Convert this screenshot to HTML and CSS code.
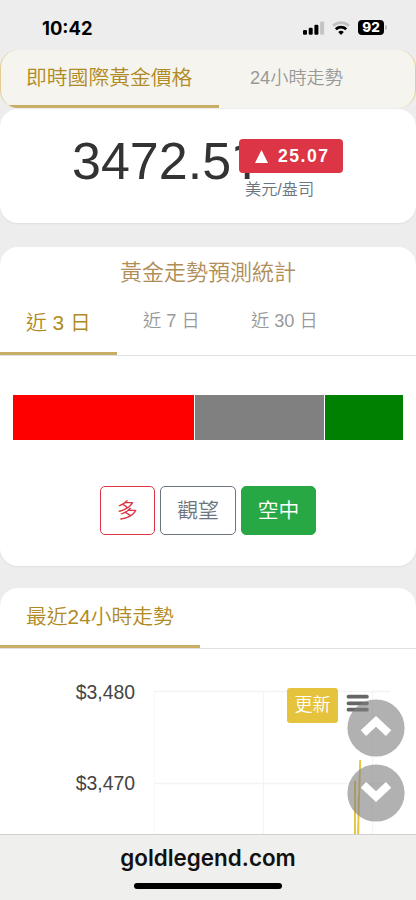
FILE: index.html
```html
<!DOCTYPE html>
<html lang="zh-Hant">
<head>
<meta charset="utf-8">
<meta name="viewport" content="width=device-width, initial-scale=1">
<title>goldlegend.com</title>
<link rel="stylesheet" href="styles.css">
</head>
<body>
<div class="screen">
  <header class="status">
    <span class="clock">10:42</span>
    <div class="indicators">
      <svg class="signal" width="22" height="14" viewBox="0 0 22 14">
        <rect x="0" y="8.9" width="4" height="4.9" rx="1.2"/>
        <rect x="5.7" y="6.8" width="4" height="7" rx="1.2"/>
        <rect x="11.4" y="3.8" width="4" height="10" rx="1.2"/>
        <rect x="17.1" y="0.6" width="4" height="13.2" rx="1.2" fill="#c4c4c4"/>
      </svg>
      <svg class="wifi" width="18" height="14" viewBox="0 0 18 14">
        <path d="M1.1 4.8a11.4 11.4 0 0 1 15.8 0" fill="none" stroke="#c1c1c1" stroke-width="2.6"/>
        <path d="M3.8 8.2a7.5 7.5 0 0 1 10.4 0" fill="none" stroke="#000" stroke-width="2.8"/>
        <path d="M6.2 11.1a4.2 4.2 0 0 1 5.6 0L9 14z"/>
      </svg>
      <div class="battery"><span class="level">92</span><span class="cap"></span></div>
    </div>
  </header>

  <nav class="price-tabs">
    <a class="price-tab active">即時國際黃金價格</a>
    <a class="price-tab">24小時走勢</a>
  </nav>

  <section class="card price-card">
    <span class="price">3472.5<span class="one">1</span></span>
    <div class="change">
      <span class="badge"><svg width="13" height="13" viewBox="0 0 13 13"><path d="M6.5 0 13 13H0z" fill="#fff"/></svg>25.07</span>
      <span class="unit">美元/盎司</span>
    </div>
  </section>

  <section class="card stats-card">
    <h2 class="stats-title">黃金走勢預測統計</h2>
    <nav class="range-tabs">
      <a class="range active">近 3 日</a>
      <a class="range week">近 7 日</a>
      <a class="range">近 30 日</a>
    </nav>
    <div class="bar"><i class="bull"></i><i class="hold"></i><i class="bear"></i></div>
    <div class="votes">
      <button class="vote long">多</button>
      <button class="vote wait">觀望</button>
      <button class="vote short">空中</button>
    </div>
  </section>

  <section class="card trend-card">
    <div class="trend-head"><span class="trend-tab">最近24小時走勢</span></div>
    <div class="chart">
      <div class="axis"><span>$3,480</span><span>$3,470</span></div>
      <svg class="plot" width="262" height="185" viewBox="154 649 262 185">
        <path d="M154 691.5H390M154 783.5H390M154 691V834M263.5 691V834M372.5 691V834" fill="none" stroke="#f4f4f4" stroke-width="1.3"/>
        <path d="M355 834V781M358 834 360.2 760M358.3 834 358.6 796" fill="none" stroke="#e7c43d" stroke-width="1.9"/>
        <path d="M348.5 696.7h18.4M348.5 703.3h18.4M348.5 709.7h18.4" stroke="#666" stroke-width="3.8" stroke-linecap="round"/>
      </svg>
      <button class="refresh">更新</button>
      <div class="scrollers">
        <svg width="58" height="58" viewBox="0 0 58 58"><circle cx="29" cy="29" r="28.6"/><path d="M16.4 34.2 29 22.4 41.6 34.2"/></svg>
        <svg width="58" height="58" viewBox="0 0 58 58"><circle cx="29" cy="29" r="28.6"/><path d="M16.4 20.8 29 32.6 41.6 20.8"/></svg>
      </div>
    </div>
  </section>

  <footer class="browser">
    <span class="address">goldlegend.com</span>
    <span class="home"></span>
  </footer>
</div>
</body>
</html>
```

FILE: styles.css
```css
* { box-sizing: border-box; }
body {
  margin: 0;
  background: #ededed;
  font-family: "Liberation Sans", "Noto Sans CJK TC", sans-serif;
  font-weight: 350;
}
.screen {
  width: 416px;
  height: 900px;
  overflow: hidden;
  display: flex;
  flex-direction: column;
}
.status {
  height: 50px;
  display: flex;
  justify-content: space-between;
  align-items: center;
  padding: 5px 29px 0 42px;
}
.clock { font: 700 18.4px/22px Inter, sans-serif; }
.indicators { display: flex; align-items: center; }
.wifi { margin: 0 8px 0 7px; }
.battery { display: flex; align-items: center; gap: 1px; }
.level {
  width: 26px;
  height: 15px;
  border-radius: 4px;
  background: #000;
  color: #fff;
  font: 800 13.5px/15px Inter, sans-serif;
  text-align: center;
}
.cap { width: 2px; height: 5px; border-radius: 0 2px 2px 0; background: #bbb; }
.price-tabs {
  height: 58px;
  display: flex;
  border: 0 solid #e3cd92;
  border-width: 0 1px;
  border-radius: 18px;
  background: #f5f4ee;
  overflow: hidden;
}
.price-tab {
  color: #999;
  font-size: 18.2px;
  line-height: 57px;
  padding-left: 31px;
}
.price-tab.active {
  width: 218px;
  padding-left: 25px;
  color: #b08a23;
  font-size: 20.8px;
  line-height: 55px;
  border-bottom: 3px solid #c9ae66;
}
.card { background: #fff; border-radius: 18px; box-shadow: 0 1px 2px rgba(0,0,0,.06); }
.price-card {
  margin-top: 1px;
  height: 114px;
  display: flex;
  padding: 22px 0 0 72px;
}
.price { width: 167px; color: #333; font-size: 52px; line-height: 60px; font-weight: 400; white-space: nowrap; }
.one { font-family: Roboto, sans-serif; line-height: 1; }
.change { position: relative; display: flex; flex-direction: column; padding-top: 8px; }
.badge {
  width: 104px;
  height: 34px;
  display: flex;
  align-items: center;
  gap: 10px;
  padding-left: 16px;
  border-radius: 4px;
  background: #dc3545;
  color: #fff;
  font-size: 17.6px;
  font-weight: 700;
  letter-spacing: 1.5px;
}
.unit { padding-left: 6px; color: #6c757d; font-size: 16.2px; line-height: 33px; }
.stats-card { margin-top: 24px; height: 319px; }
.stats-title { margin: 0; padding-top: 10px; text-align: center; color: #b08d57; font-size: 22px; line-height: 32px; font-weight: 350; }
.range-tabs { height: 67px; display: flex; border-bottom: 1px solid #dee2e6; }
.range { padding-left: 25px; color: #999; font-size: 18.2px; line-height: 65px; white-space: nowrap; }
.range.week { width: 109px; padding-left: 26px; }
.range.active { width: 117px; height: 66px; padding-left: 26px; color: #b08a23; font-size: 20.8px; line-height: 68px; border-bottom: 3px solid #c9ae66; }
.bar { display: flex; gap: 1px; height: 45px; margin: 39px 13px 0; }
.bull { width: 181px; background: red; }
.hold { width: 129px; background: gray; }
.bear { flex: 1; background: green; }
.votes { display: flex; justify-content: center; gap: 5px; margin-top: 46px; }
.vote {
  height: 49px;
  padding: 0 0 4px;
  border: 1px solid;
  border-radius: 5px;
  background: #fff;
  font: inherit;
  font-size: 20.8px;
}
.long { width: 55px; color: #dc3545; }
.wait { width: 76px; color: #6c757d; }
.short { width: 75px; color: #fff; background: #28a745; border-color: #28a745; }
.trend-card { margin-top: 22px; height: 246px; border-radius: 18px 18px 0 0; }
.trend-head { height: 61px; display: flex; border-bottom: 1px solid #dee2e6; }
.trend-tab { width: 200px; height: 60px; padding-left: 26px; color: #b08a23; font-size: 20.8px; line-height: 57px; border-bottom: 3px solid #c9ae66; }
.chart { position: relative; display: flex; height: 185px; }
.axis { width: 154px; display: flex; flex-direction: column; gap: 67px; padding: 31px 19px 0 0; text-align: right; color: #444; font-size: 19.4px; font-weight: 400; line-height: 24px; }
.refresh {
  position: absolute;
  left: 287px;
  top: 39px;
  width: 51px;
  height: 35px;
  padding: 0 0 5px;
  border: 0;
  border-radius: 3px;
  background: #e5c33c;
  color: #fff;
  font: inherit;
  font-size: 18px;
}
.scrollers { position: absolute; left: 347px; top: 50px; display: flex; flex-direction: column; gap: 7px; }
.scrollers svg { display: block; }
.scrollers circle { fill: #808080; fill-opacity: .61; }
.scrollers path { fill: none; stroke: #fff; stroke-width: 7.8; stroke-linejoin: miter; }
.browser {
  position: relative;
  height: 66px;
  display: flex;
  flex-direction: column;
  align-items: center;
  background: #efefee;
  border-top: 1px solid #cfcfcf;
}
.address { margin-top: 9px; font: 600 22.4px/28px Inter, sans-serif; color: #111; }
.home { width: 148px; height: 6px; margin-top: 11px; border-radius: 3px; background: #000; }
```
